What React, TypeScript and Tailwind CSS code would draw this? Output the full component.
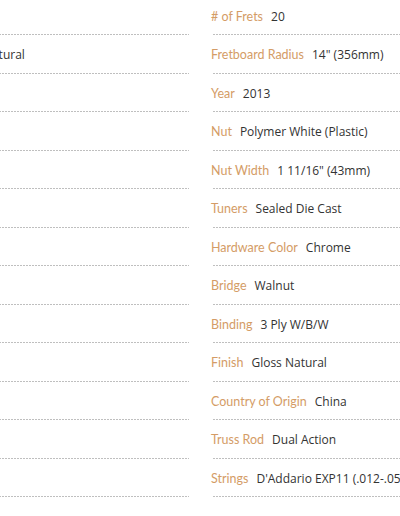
const left = [
  { label: 'Body', value: 'Dreadnought' },
  { label: 'Neck Finish', value: 'Satin Natural' },
  { label: 'Top', value: 'Solid Spruce' },
  { label: 'Back', value: 'Mahogany' },
  { label: 'Sides', value: 'Mahogany' },
  { label: 'Neck', value: 'Mahogany' },
  { label: 'Scale', value: '25.5"' },
  { label: 'Bracing', value: 'Scalloped X' },
  { label: 'Pickup', value: 'None' },
  { label: 'Cutaway', value: 'No' },
  { label: 'Case', value: 'Gig Bag' },
  { label: 'Color', value: 'Natural' },
  { label: 'Hand', value: 'Right' },
];

const right = [
  { label: '# of Frets', value: '20' },
  { label: 'Fretboard Radius', value: '14" (356mm)' },
  { label: 'Year', value: '2013' },
  { label: 'Nut', value: 'Polymer White (Plastic)' },
  { label: 'Nut Width', value: '1 11/16" (43mm)' },
  { label: 'Tuners', value: 'Sealed Die Cast' },
  { label: 'Hardware Color', value: 'Chrome' },
  { label: 'Bridge', value: 'Walnut' },
  { label: 'Binding', value: '3 Ply W/B/W' },
  { label: 'Finish', value: 'Gloss Natural' },
  { label: 'Country of Origin', value: 'China' },
  { label: 'Truss Rod', value: 'Dual Action' },
  { label: 'Strings', value: "D'Addario EXP11 (.012-.053)" },
];

type Spec = { label: string; value: string };

function SpecRow({ spec }: { spec: Spec }) {
  return (
    <li className="flex flex-col">
      <div className="mt-[10px] mb-[7.5px] h-[20px] flex items-baseline whitespace-nowrap">
        <span className="font-['Lato',sans-serif] text-[12.5px] leading-[20px] text-[#d49c66] mr-[8px]">{spec.label}</span>
        <span className="font-['Open_Sans',sans-serif] text-[12px] leading-[20px] text-[#333333]">{spec.value}</span>
      </div>
      {/* dotted separator */}
      <div className="h-px ml-[2px] bg-[linear-gradient(to_right,#a9a9a9_60%,transparent_60%)] bg-[length:3px_1px] bg-repeat-x opacity-75" />
    </li>
  );
}

export default function App() {
  return (
    <div className="w-[400px] h-[516px] overflow-hidden bg-white">
      <div className="flex -mt-[3.5px] gap-[22px]">
        <ul className="w-[309px] -ml-[120px] shrink-0">
          {left.map((s, i) => (
            <SpecRow key={i} spec={s} />
          ))}
        </ul>
        <ul className="w-[400px] shrink-0">
          {right.map((s, i) => (
            <SpecRow key={i} spec={s} />
          ))}
        </ul>
      </div>
    </div>
  );
}
